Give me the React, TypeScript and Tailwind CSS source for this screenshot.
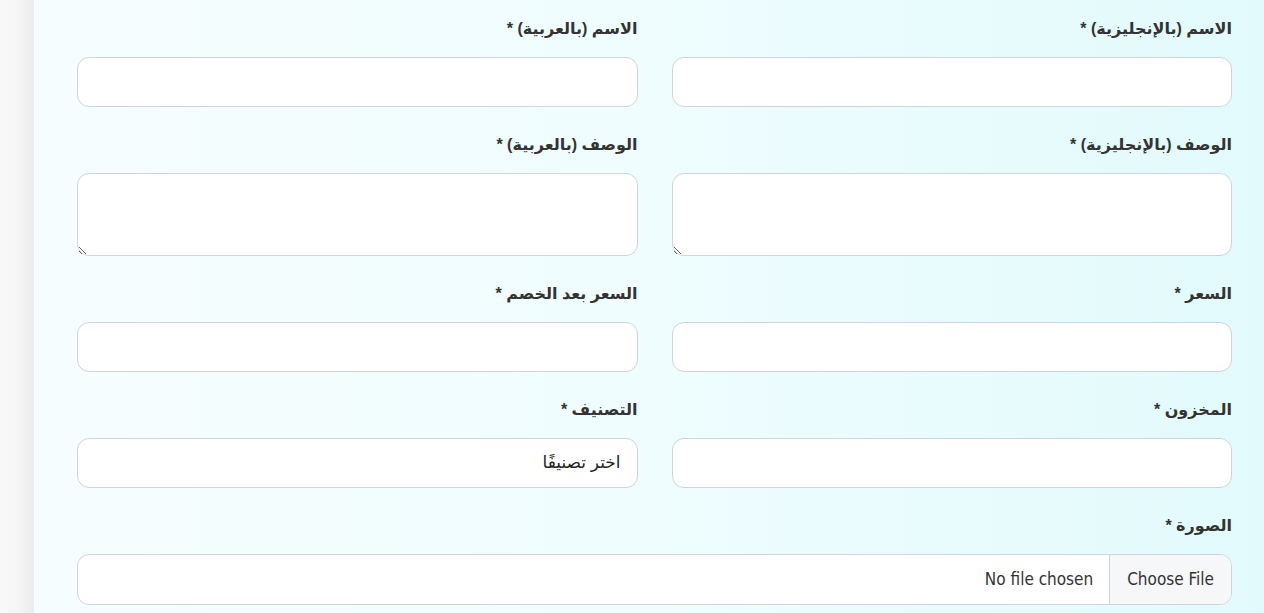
import React from 'react';

const Label: React.FC<{ text: string }> = ({ text }) => (
  <label className="block text-[16px] leading-6 font-bold text-[#333] mb-4">{text} *</label>
);

const inputCls =
  'w-full h-[50px] rounded-xl border border-[#cfd4d8] bg-white px-4 text-[16px] text-[#222] outline-none';

const TextField: React.FC<{ label: string }> = ({ label }) => (
  <div>
    <Label text={label} />
    <input type="text" className={inputCls} />
  </div>
);

const AreaField: React.FC<{ label: string }> = ({ label }) => (
  <div>
    <Label text={label} />
    <textarea
      rows={3}
      className="block w-full h-[83px] rounded-xl border border-[#cfd4d8] bg-white px-4 py-2 text-[16px] outline-none"
    />
  </div>
);

export default function App() {
  return (
    <div
      className="flex h-[613px] w-full overflow-hidden"
      style={{ fontFamily: '"Liberation Sans", "DejaVu Sans", Arial, sans-serif' }}
    >
      <div className="w-[34px] shrink-0 bg-gradient-to-r from-[#f8f8f8] via-[#f6f6f6] to-[#ececec]" />
      <main className="flex-1 bg-gradient-to-r from-[#f6fdfe] via-[#effdfe] to-[#e2fafc] pl-[43px] pr-8 pt-[17px]">
        <form dir="rtl" className="grid grid-cols-2 gap-x-[34px] gap-y-[26px]">
          <TextField label="الاسم (بالإنجليزية)" />
          <TextField label="الاسم (بالعربية)" />
          <AreaField label="الوصف (بالإنجليزية)" />
          <AreaField label="الوصف (بالعربية)" />
          <TextField label="السعر" />
          <TextField label="السعر بعد الخصم" />
          <TextField label="المخزون" />
          <div>
            <Label text="التصنيف" />
            <select className={inputCls + ' appearance-none text-[17px]'} defaultValue="">
              <option value="">اختر تصنيفًا</option>
            </select>
          </div>
          <div className="col-span-2">
            <Label text="الصورة" />
            <input
              type="file"
              className="block w-full h-[51px] rounded-xl border border-[#cfd4d8] bg-white overflow-hidden text-[17px] text-[#333] file:h-full file:mr-0 file:ml-4 file:border-0 file:border-l file:border-[#cfd4d8] file:bg-[#f5f7f9] file:px-[17px] file:text-[17px] file:text-[#333]"
              style={{ fontFamily: '"DejaVu Sans Condensed", "Roboto", sans-serif', fontStretch: 'condensed' }}
            />
          </div>
        </form>
      </main>
    </div>
  );
}
